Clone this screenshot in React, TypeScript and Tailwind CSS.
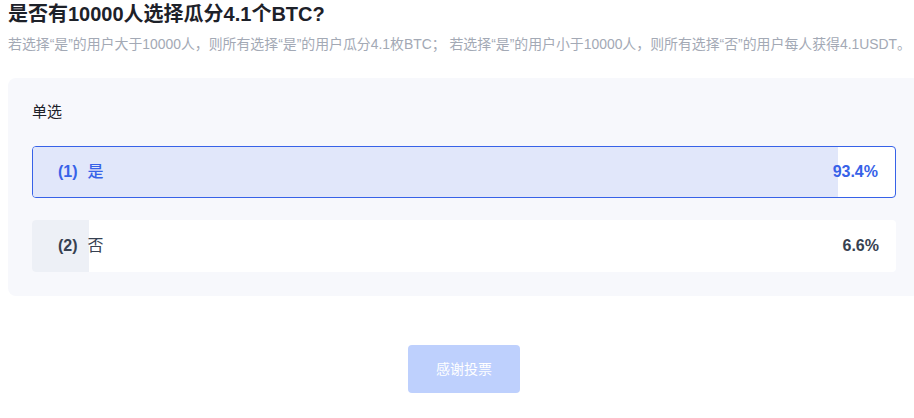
const options = [
  { id: 1, label: '是', percent: 93.4, selected: true },
  { id: 2, label: '否', percent: 6.6, selected: false },
]

export default function App() {
  return (
    <div
      className="w-[914px] h-[418px] overflow-hidden bg-white"
      style={{ fontFamily: '"Liberation Sans", "Noto Sans CJK SC", sans-serif' }}
    >
      <div className="w-[928px]">
        <div className="pl-2">
          <h1 className="text-[20px] leading-[28px] font-bold text-[#1d2129]">是否有10000人选择瓜分4.1个BTC?</h1>
          <p className="mt-1.5 text-[13.9px] leading-[20px] text-[#a3a9b5] whitespace-nowrap">
            若选择“是”的用户大于10000人，则所有选择“是”的用户瓜分4.1枚BTC； 若选择“是”的用户小于10000人，则所有选择“否”的用户每人获得4.1USDT。
          </p>

          {/* Vote card */}
          <div className="mt-6 w-[912px] rounded-lg bg-[#f7f8fc] px-6 pt-6 pb-6">
            <div className="text-[15px] leading-[20px] text-[#1d2129]">单选</div>
            <div className="mt-6 flex flex-col gap-[22px]">
              {options.map((opt) => (
                <div
                  key={opt.id}
                  className={`relative h-[52px] rounded overflow-hidden bg-white ${
                    opt.selected ? 'border border-[#3762e8]' : ''
                  }`}
                >
                  <div
                    className={`absolute left-0 top-0 bottom-0 ${opt.selected ? 'bg-[#e1e7fa]' : 'bg-[#edf0f6]'}`}
                    style={{ width: `${opt.percent}%` }}
                  />
                  <div
                    className={`relative flex h-full items-center justify-between pr-[17px] text-[16px] ${
                      opt.selected ? 'pl-[25px] text-[#3762e8]' : 'pl-[26px] text-[#374151]'
                    }`}
                  >
                    <div className="flex items-center">
                      <span className="font-bold">({opt.id})</span>
                      <span className={`ml-2.5 ${opt.selected ? 'font-medium' : ''}`}>{opt.label}</span>
                    </div>
                    <span className="font-bold">{opt.percent}%</span>
                  </div>
                </div>
              ))}
            </div>
          </div>
        </div>

        <div className="mt-[49px] flex justify-center">
          <button className="w-[112px] h-[48px] rounded bg-[#bed0fd] text-white text-[14px]">感谢投票</button>
        </div>
      </div>
    </div>
  )
}
